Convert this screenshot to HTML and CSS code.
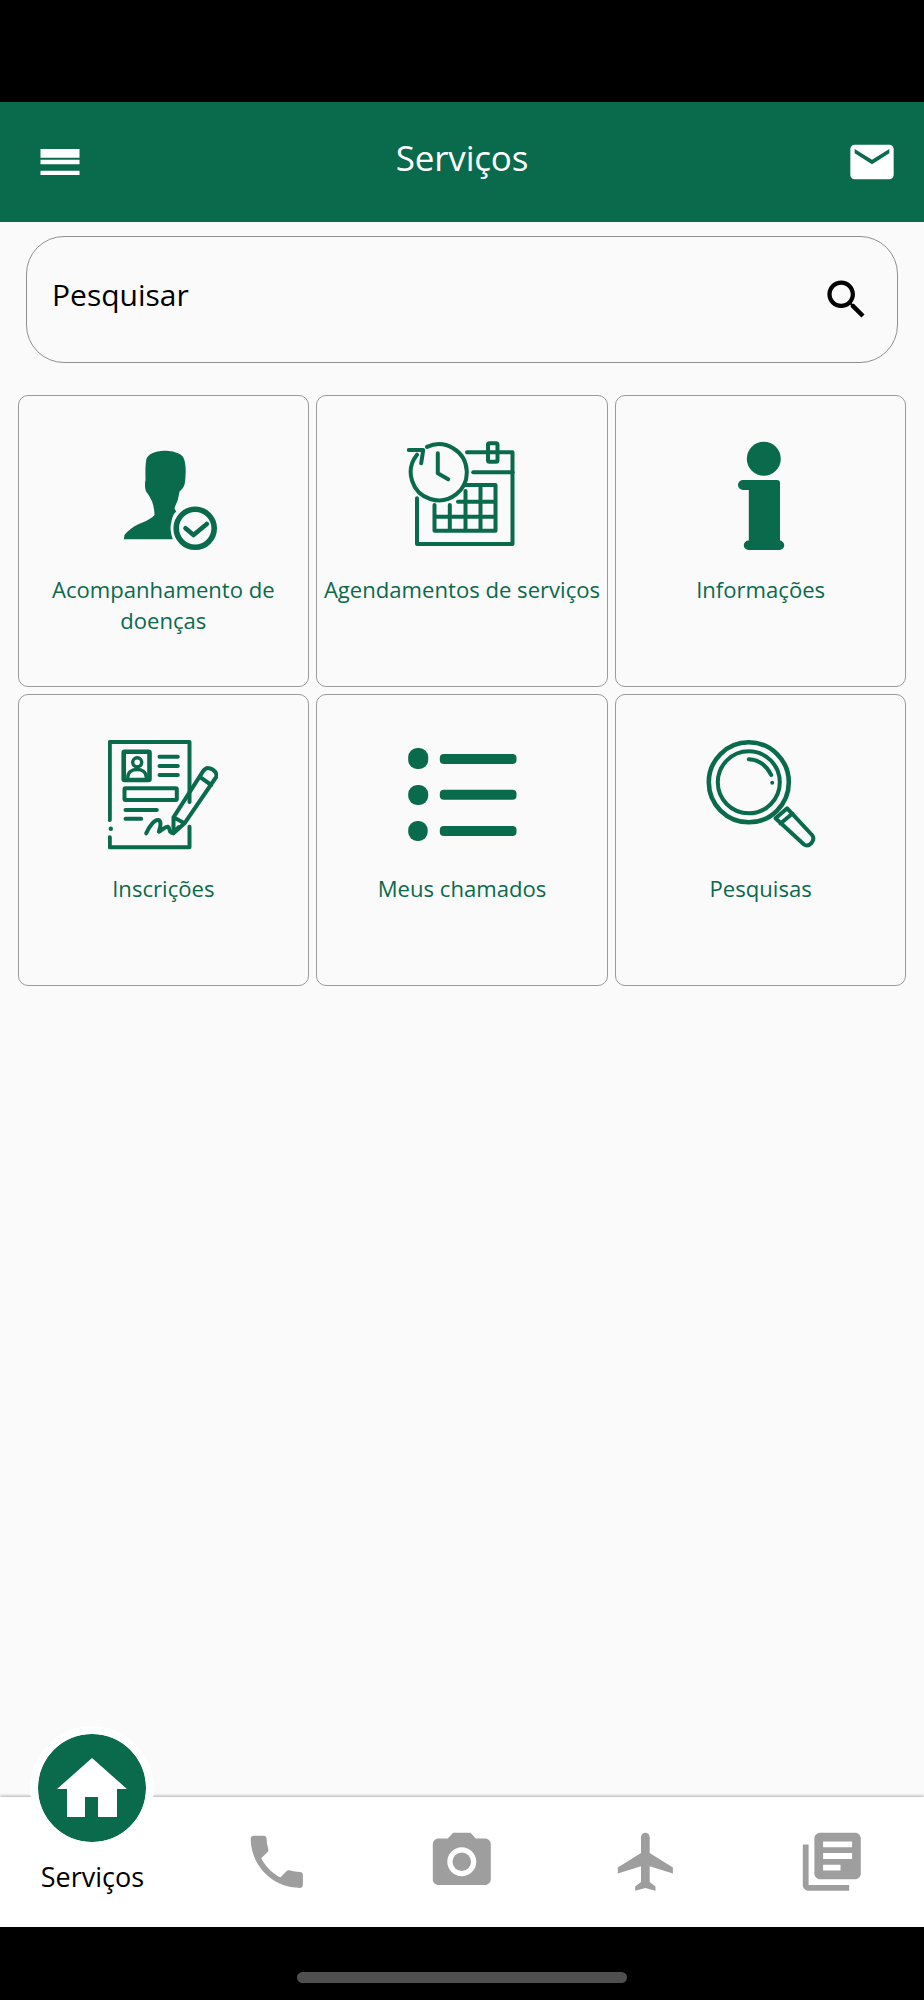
FILE: index.html
```html
<!DOCTYPE html>
<html lang="pt">
<head>
<meta charset="utf-8">
<title>Serviços</title>
<link rel="stylesheet" href="styles.css">
</head>
<body>
<div class="status-bar"></div>
<header class="app-header">
  <svg class="header-icon" viewBox="0 0 24 24"><path d="M3 18h18v-2H3v2zm0-5h18v-2H3v2zm0-5v2h18V6H3z"/></svg>
  <h1 class="app-title">Serviços</h1>
  <svg class="header-icon header-icon-end" viewBox="0 0 24 24"><path d="M20 4H4c-1.1 0-1.99.9-1.99 2L2 18c0 1.1.9 2 2 2h16c1.1 0 2-.9 2-2V6c0-1.1-.9-2-2-2zm0 4l-8 5-8-5V6l8 5 8-5v2z"/></svg>
</header>
<main class="content">
  <div class="search">
    <span class="search-label">Pesquisar</span>
    <svg class="search-icon" viewBox="0 0 24 24"><path d="M15.5 14h-.79l-.28-.27C15.41 12.59 16 11.11 16 9.5 16 5.91 13.09 3 9.5 3S3 5.91 3 9.5 5.91 16 9.5 16c1.61 0 3.09-.59 4.23-1.57l.27.28v.79l5 4.99L20.49 19l-4.99-5zm-6 0C7.01 14 5 11.99 5 9.5S7.01 5 9.5 5 14 7.01 14 9.5 11.99 14 9.5 14z"/></svg>
  </div>
  <div class="grid">
    <div class="card">
      <svg class="card-icon" viewBox="0 0 110 116">
        <path class="solid" d="M56.5 9.7C48 9.5 39 13 38.2 19C37 27 37.5 33 37.5 39C36.5 43 37 48 38.2 50.7C40 53 42 56 44.2 60.7C45.5 65 46.5 69 46.5 74C42 80 30 82 24 87C20 90 17 93 16.5 94L15.8 98.3H64.8C62.5 92 62 85.7 63.2 82C64 76 66 72 68.2 70.7L66.5 67.3C67.5 64 69 61 69.8 59C70.5 56 71 53 71.5 50.7C74.5 48 76.5 45 76.8 42.3C77.5 37 78 31 77.5 25.7C77 20 76 16 73.2 14C68 10.5 62 9.7 56.5 9.7Z"/>
        <circle class="line ring" cx="87.2" cy="87.3" r="19"/>
        <path class="line thick" d="M77.5 87.3L85.5 94L98.8 83"/>
      </svg>
      <span class="card-label">Acompanhamento de doenças</span>
    </div>
    <div class="card">
      <svg class="card-icon" viewBox="0 0 110 116">
        <path class="line" d="M10 57.3V103H105.5V11.3H60"/>
        <rect class="line" x="81" y="2.3" width="9.5" height="18.4" rx="1.5"/>
        <path class="line" d="M66.2 31.3H105.5"/>
        <path class="line" d="M56.8 44H88.5V89.7H27.5V64M73.5 44V89.7M58.5 50V89.7M42.8 64V89.7M51 60.7H88.5M27.5 75.7H88.5"/>
        <path class="line" d="M20 5.9A28 28 0 1 1 10 13.7"/>
        <path class="line" d="M1.8 9H16.2L14.2 22.3"/>
        <path class="line" d="M30.8 12.3V32.3L41.2 38.3"/>
      </svg>
      <span class="card-label">Agendamentos de serviços</span>
    </div>
    <div class="card">
      <svg class="card-icon" viewBox="0 0 110 116">
        <circle class="solid" cx="57.8" cy="17.7" r="17"/>
        <path class="solid" d="M37 39H71a3 3 0 0 1 3 3V99.5H73.5a4.7 4.7 0 0 1 0 9.5H42.5a4.7 4.7 0 0 1 0-9.5H42.8V49H37a5 5 0 0 1 0-10z"/>
      </svg>
      <span class="card-label">Informações</span>
    </div>
    <div class="card">
      <svg class="card-icon" viewBox="0 0 110 116">
        <path class="line" d="M1.8 80V2H81.5V62M81.5 86.7V107.3H1.8V97.3"/>
        <circle class="solid" cx="2.8" cy="88.7" r="2.2"/>
        <rect class="line thick" x="15.7" y="11.7" width="25.8" height="28.3" rx="1"/>
        <circle class="line slim" cx="29.2" cy="22.3" r="4.5"/>
        <path class="line slim" d="M19.8 37C20 32 24 29.5 29.2 29.5C34 29.5 38 32 38.2 37"/>
        <path class="line" d="M51.5 16.7H69.8M51.5 26H69.8M51.5 35H69.8"/>
        <rect class="line" x="16.5" y="48.3" width="52.3" height="11.7" rx="1"/>
        <path class="line" d="M17.5 70H48.8M17.5 78.7H33.2"/>
        <path class="line" d="M38.2 93.3C41 87 46 80 49.8 80C53.5 80 53 86 50.8 91.7C54 91 57 86 59.8 86.7C62 87.5 61 92 63.2 92.7C66 92 68 90 71 87"/>
        <path class="line" d="M65.5 93.3V77.3L94.8 31.7C96.5 29 99 27.5 101.5 28.3C106 29.5 109.5 33 108.2 37L76.5 83.3ZM65.5 77.3L76.5 83.3M91.5 36.7L103.2 45"/>
      </svg>
      <span class="card-label">Inscrições</span>
    </div>
    <div class="card">
      <svg class="card-icon" viewBox="0 0 110 116">
        <rect class="solid" x="1.2" y="8" width="20" height="21" rx="9"/>
        <rect class="solid" x="1.2" y="45" width="20" height="20" rx="9"/>
        <rect class="solid" x="1.2" y="81" width="19.5" height="20" rx="9"/>
        <rect class="solid" x="32.8" y="14" width="76.7" height="10" rx="4"/>
        <rect class="solid" x="32.8" y="49.7" width="76.7" height="10" rx="4"/>
        <rect class="solid" x="32.8" y="86" width="76.7" height="10" rx="4"/>
      </svg>
      <span class="card-label">Meus chamados</span>
    </div>
    <div class="card">
      <svg class="card-icon" viewBox="0 0 110 116">
        <circle class="line thick" cx="42.8" cy="42.3" r="40"/>
        <circle class="line" cx="42.8" cy="42.3" r="31"/>
        <path class="line" d="M42.8 19.3C53 20 61 26 65.2 35"/>
        <circle class="solid" cx="66.2" cy="42.7" r="2"/>
        <path class="line" d="M69.5 78.3L81.2 68.3L106 95C108 97.5 107.5 100.5 105.5 103C103 105.5 100 106 98 104.5ZM74.5 83.5L86.5 73.5"/>
      </svg>
      <span class="card-label">Pesquisas</span>
    </div>
  </div>
</main>
<nav class="tab-bar">
  <div class="tab tab-active">
    <span class="home-badge">
      <svg class="home-icon" viewBox="0 0 70 60"><path d="M35 0L70 31H60V59H41V39H28V59H10V31H0Z"/></svg>
    </span>
    <span class="tab-label">Serviços</span>
  </div>
  <div class="tab">
    <svg class="tab-icon" viewBox="0 0 24 24"><path d="M6.62 10.79c1.44 2.83 3.76 5.14 6.59 6.59l2.2-2.2c.27-.27.67-.36 1.02-.24 1.12.37 2.33.57 3.57.57.55 0 1 .45 1 1V20c0 .55-.45 1-1 1-9.39 0-17-7.61-17-17 0-.55.45-1 1-1h3.5c.55 0 1 .45 1 1 0 1.25.2 2.45.57 3.57.11.35.03.74-.25 1.02l-2.2 2.2z"/></svg>
  </div>
  <div class="tab">
    <svg class="tab-icon" viewBox="0 0 24 24"><circle cx="12" cy="12" r="3.2"/><path d="M9 2L7.17 4H4c-1.1 0-2 .9-2 2v12c0 1.1.9 2 2 2h16c1.1 0 2-.9 2-2V6c0-1.1-.9-2-2-2h-3.17L15 2H9zm3 15c-2.76 0-5-2.24-5-5s2.24-5 5-5 5 2.24 5 5-2.24 5-5 5z"/></svg>
  </div>
  <div class="tab">
    <svg class="tab-icon" viewBox="0 0 24 24"><path d="M21 16v-2l-8-5V3.5c0-.83-.67-1.5-1.5-1.5S10 2.67 10 3.5V9l-8 5v2l8-2.5V19l-2 1.5V22l3.5-1 3.5 1v-1.5L13 19v-5.5l8 2.5z"/></svg>
  </div>
  <div class="tab">
    <svg class="tab-icon" viewBox="0 0 24 24"><path d="M4 6H2v14c0 1.1.9 2 2 2h14v-2H4V6zm16-4H8c-1.1 0-2 .9-2 2v12c0 1.1.9 2 2 2h12c1.1 0 2-.9 2-2V4c0-1.1-.9-2-2-2zm-1 9H9V9h10v2zm-4 4H9v-2h6v2zm4-8H9V5h10v2z"/></svg>
  </div>
</nav>
<div class="system-nav"><span class="home-pill"></span></div>
</body>
</html>
```

FILE: styles.css
```css
* { box-sizing: border-box; }
html, body { margin: 0; padding: 0; }
body {
  width: 924px;
  height: 2000px;
  display: flex;
  flex-direction: column;
  background: #fafafa;
  font-family: "Open Sans", "Noto Sans", sans-serif;
  overflow: hidden;
}
.status-bar { height: 102px; background: #000; flex: none; }
.app-header {
  height: 120px;
  flex: none;
  background: #0a6a4c;
  display: grid;
  grid-template-columns: 1fr auto 1fr;
  align-items: center;
  padding: 0 26px 0 34px;
}
.header-icon { width: 52px; height: 52px; fill: #fff; }
.header-icon-end { justify-self: end; }
.app-title {
  margin: 0 8px 8px 0;
  font-size: 35px;
  font-weight: 400;
  line-height: 46px;
  letter-spacing: -0.2px;
  color: #fff;
}
.content { flex: 1; display: flex; flex-direction: column; min-height: 0; }
.search {
  height: 127px;
  margin: 14px 26px 0;
  border: 1px solid #8f8f8f;
  border-radius: 38px;
  display: flex;
  align-items: center;
  justify-content: space-between;
  padding: 0 25px;
}
.search-label { font-size: 30px; line-height: 40px; color: #000; margin-bottom: 10px; }
.search-icon { width: 51px; height: 51px; fill: #000; }
.grid {
  margin-top: 32px;
  padding: 0 17.5px;
  display: grid;
  grid-template-columns: repeat(3, 1fr);
  grid-auto-rows: 292px;
  gap: 7px;
}
.card {
  border: 1.5px solid #9a9a9a;
  border-radius: 10px;
  padding: 44.5px 4px 0;
  display: flex;
  flex-direction: column;
  align-items: center;
  text-align: center;
}
.card-icon { width: 110px; height: 116px; flex: none; }
.card-label {
  margin-top: 17.5px;
  font-size: 22.1px;
  line-height: 30.6px;
  color: #0a6a4c;
}
.solid { fill: #0a6a4c; }
.line {
  fill: none;
  stroke: #0a6a4c;
  stroke-width: 4;
  stroke-linecap: round;
  stroke-linejoin: round;
}
.thick { stroke-width: 4.6; }
.ring { stroke-width: 5.6; }
.slim { stroke-width: 3.4; }
.tab-bar {
  position: relative;
  height: 130px;
  flex: none;
  background: #fff;
  box-shadow: 0 -1px 3px rgba(0, 0, 0, 0.3);
  display: flex;
}
.tab {
  flex: 1;
  display: flex;
  justify-content: center;
  align-items: flex-start;
  padding-top: 30px;
}
.tab-icon { width: 69.6px; height: 69.6px; fill: #9e9e9e; }
.tab-active { position: relative; }
.home-badge {
  position: absolute;
  left: 30px;
  top: -71px;
  width: 124px;
  height: 124px;
  border: 8px solid #fff;
  border-radius: 50%;
  background: #0a6a4c;
  background-clip: padding-box;
  display: flex;
  align-items: center;
  justify-content: center;
}
.home-icon { width: 70px; height: 60px; fill: #fff; }
.tab-label {
  position: absolute;
  left: 0;
  right: 0;
  top: 62px;
  text-align: center;
  font-size: 27px;
  line-height: 36px;
  color: #000;
}
.system-nav {
  height: 73px;
  flex: none;
  background: #000;
  display: flex;
  justify-content: center;
  padding-top: 45px;
}
.home-pill { width: 330px; height: 11px; border-radius: 6px; background: #4f4f4f; }
```
